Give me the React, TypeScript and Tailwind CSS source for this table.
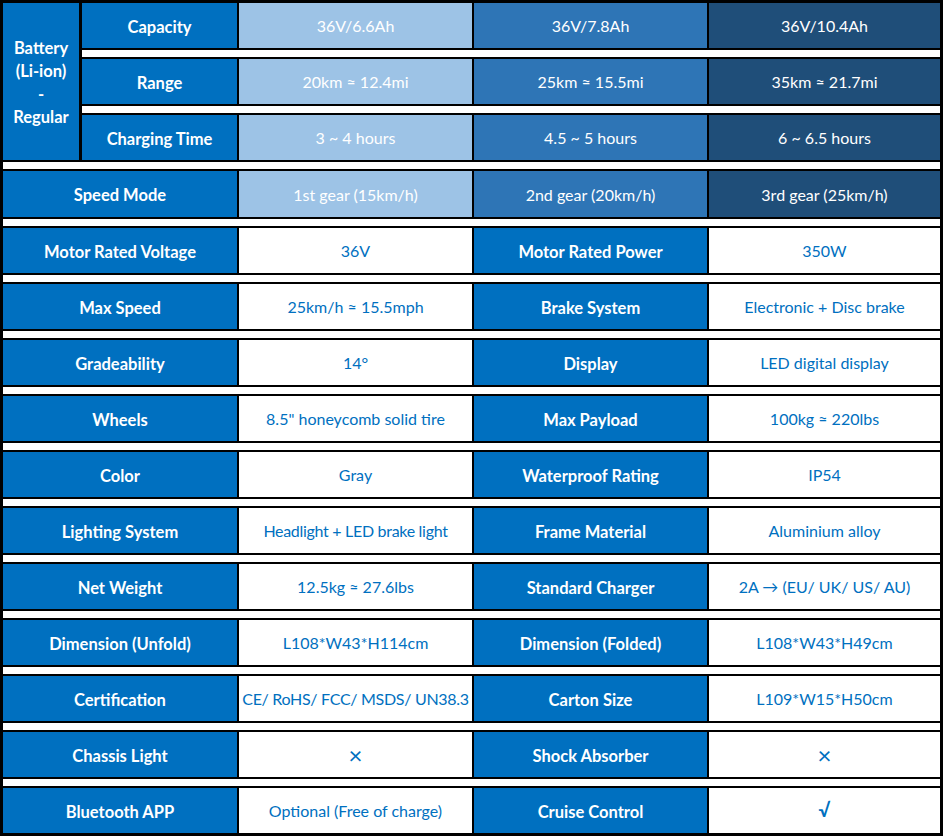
const LABEL = 'bg-[#0070C0] flex items-center justify-center pt-[3px] text-center font-bold text-white text-[16.5px] whitespace-nowrap'
const VALUE = 'bg-white flex items-center justify-center text-center text-[#0070C0] whitespace-nowrap'
const TIERS = ['bg-[#9DC3E6]', 'bg-[#2E75B6]', 'bg-[#1F4E79]']

const battery = [
  ['Capacity', '36V/6.6Ah', '36V/7.8Ah', '36V/10.4Ah'],
  ['Range', '20km ≈ 12.4mi', '25km ≈ 15.5mi', '35km ≈ 21.7mi'],
  ['Charging Time', '3 ~ 4 hours', '4.5 ~ 5 hours', '6 ~ 6.5 hours'],
]

const specs = [
  ['Motor Rated Voltage', '36V', 'Motor Rated Power', '350W'],
  ['Max Speed', '25km/h ≈ 15.5mph', 'Brake System', 'Electronic + Disc brake'],
  ['Gradeability', '14°', 'Display', 'LED digital display'],
  ['Wheels', '8.5" honeycomb solid tire', 'Max Payload', '100kg ≈ 220lbs'],
  ['Color', 'Gray', 'Waterproof Rating', 'IP54'],
  ['Lighting System', 'Headlight + LED brake light', 'Frame Material', 'Aluminium alloy'],
  ['Net Weight', '12.5kg ≈ 27.6lbs', 'Standard Charger', '2A → (EU/ UK/ US/ AU)'],
  ['Dimension (Unfold)', 'L108*W43*H114cm', 'Dimension (Folded)', 'L108*W43*H49cm'],
  ['Certification', 'CE/ RoHS/ FCC/ MSDS/ UN38.3', 'Carton Size', 'L109*W15*H50cm'],
  ['Chassis Light', '×', 'Shock Absorber', '×'],
  ['Bluetooth APP', 'Optional (Free of charge)', 'Cruise Control', '√'],
]

function Gap() {
  return <div className="my-[2px] h-[7px] bg-white" />
}

function mark(v: string) {
  if (v === '×') return 'text-[24px]'
  if (v === '√') return 'text-[19px] font-bold'
  if (v.length > 25) return 'tracking-[-0.3px]'
  return ''
}

export default function App() {
  return (
    <div className="min-h-screen bg-white font-['Lato',sans-serif] text-[16px]">
      <div className="flex w-[943px] flex-col bg-black p-[3px]">
        <div className="flex gap-[3px]">
          <div className={`${LABEL} w-[76px] leading-[23px]`}>
            Battery
            <br />
            (Li-ion)
            <br />
            -
            <br />
            Regular
          </div>
          <div className="flex flex-1 flex-col">
            {battery.map(([label, ...vals], i) => (
              <div key={label}>
                {i > 0 && <Gap />}
                <div className="grid h-[45px] grid-cols-[155px_233px_233px_1fr] gap-x-[2px]">
                  <div className={LABEL}>{label}</div>
                  {vals.map((v, j) => (
                    <div key={j} className={`${TIERS[j]} flex items-center justify-center pt-[1px] text-white`}>
                      {v}
                    </div>
                  ))}
                </div>
              </div>
            ))}
          </div>
        </div>
        <Gap />
        <div className="grid h-[46px] grid-cols-[234px_233px_233px_1fr] gap-x-[2px]">
          <div className={LABEL}>Speed Mode</div>
          {['1st gear (15km/h)', '2nd gear (20km/h)', '3rd gear (25km/h)'].map((v, j) => (
            <div key={v} className={`${TIERS[j]} flex items-center justify-center pt-[1px] text-white`}>
              {v}
            </div>
          ))}
        </div>
        {specs.map(([a, av, b, bv]) => (
          <div key={a}>
            <Gap />
            <div className="grid h-[45px] grid-cols-[234px_233px_233px_1fr] gap-x-[2px]">
              <div className={LABEL}>{a}</div>
              <div className={`${VALUE} ${mark(av)}`}>{av}</div>
              <div className={LABEL}>{b}</div>
              <div className={`${VALUE} ${mark(bv)}`}>{bv}</div>
            </div>
          </div>
        ))}
      </div>
    </div>
  )
}
